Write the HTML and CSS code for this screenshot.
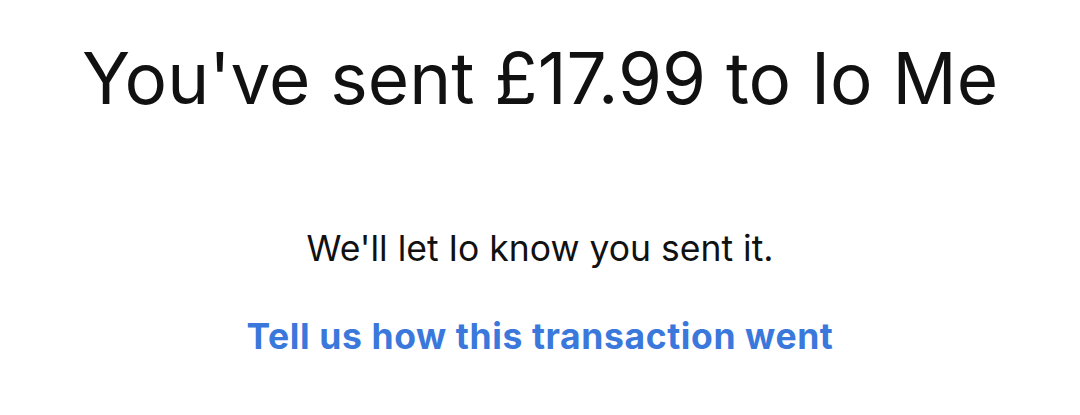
FILE: index.html
```html
<!DOCTYPE html>
<html lang="en">
<head>
<meta charset="utf-8">
<title>Sent</title>
<link rel="stylesheet" href="styles.css">
</head>
<body>
<main class="screen">
  <h1 class="title">You've sent £17.99 to Io Me</h1>
  <p class="note">We'll let Io know you sent it.</p>
  <a class="feedback" href="#">Tell us how this transaction went</a>
</main>
</body>
</html>
```

FILE: styles.css
```css
html, body {
  margin: 0;
  padding: 0;
  background: #ffffff;
}
.screen {
  display: flex;
  flex-direction: column;
  align-items: center;
  padding-top: 35px;
  font-family: Inter, "Liberation Sans", Arial, sans-serif;
  color: #111111;
}
.title {
  margin: 0;
  font-size: 71px;
  line-height: 86px;
  font-weight: 400;
  white-space: nowrap;
}
.note {
  margin: 108px 0 0;
  font-size: 35.5px;
  line-height: 40px;
}
.feedback {
  margin-top: 48px;
  font-size: 35.5px;
  line-height: 40px;
  font-weight: 700;
  letter-spacing: 0.6px;
  color: #3a78dc;
  text-decoration: none;
}
```
